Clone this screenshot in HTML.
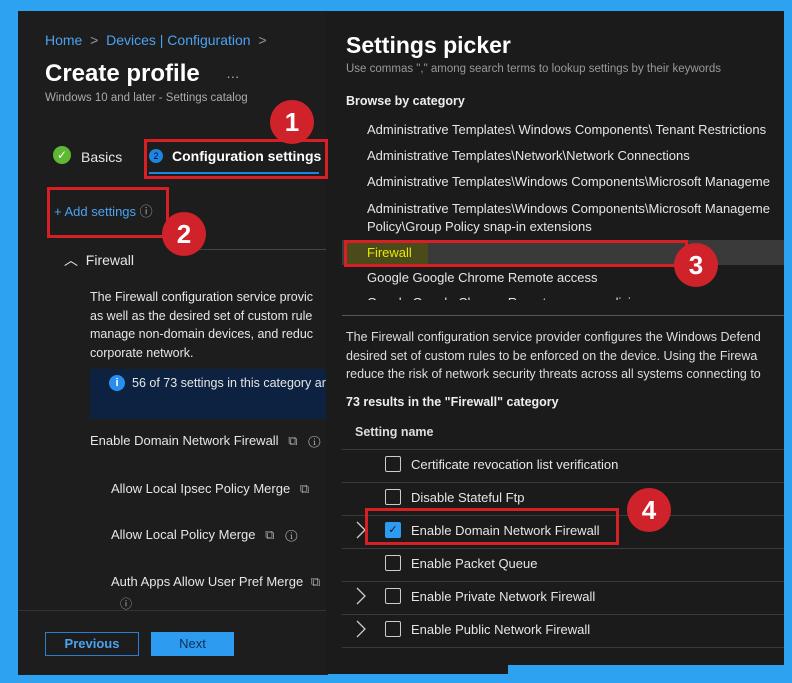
<!DOCTYPE html><html><head><style>
body{margin:0;width:792px;height:683px;background:#2ca2f0;position:relative;overflow:hidden;font-family:"Liberation Sans",sans-serif;}
.a{position:absolute;white-space:nowrap}
.l{position:absolute;left:18px;top:11px;width:310px;height:664px;background:#1e1d1d;overflow:hidden}
.r{position:absolute;left:326px;top:11px;width:458px;height:654px;background:#1b1b1b;overflow:hidden}
.rb{position:absolute;left:326px;top:650px;width:182px;height:24px;background:#1b1b1b}
.t{color:#e6e6e6;font-size:13px}
.red{position:absolute;border:3px solid #d81f26;box-sizing:border-box}
.num{position:absolute;width:44px;height:44px;border-radius:50%;background:#d0222a;color:#fff;font-weight:bold;font-size:26px;text-align:center;line-height:44px}
.cb{position:absolute;width:16px;height:16px;border:1px solid #ccc;border-radius:2px;box-sizing:border-box}
.ln{position:absolute;height:1px;background:#3a3a3a}
.chev{position:absolute;left:30px;width:10px;height:18px}
</style></head><body>
<div class="l">
<div class="a" style="left:27px;top:21px;color:#4aa3f0;font-size:14px">Home &nbsp;<span style="color:#999">&gt;</span>&nbsp; Devices | Configuration &nbsp;<span style="color:#999">&gt;</span></div>
<div class="a" style="left:27px;top:49px;color:#fff;font-size:24px;font-weight:bold">Create profile <span style="font-size:13px;font-weight:normal;color:#bbb;margin-left:20px">···</span></div>
<div class="a" style="left:27px;top:81px;color:#aaa;font-size:11.5px">Windows 10 and later - Settings catalog</div>
<div class="a" style="left:35px;top:135px;width:18px;height:18px;border-radius:50%;background:#5fb832;color:#fff;font-size:12px;text-align:center;line-height:18px">✓</div>
<div class="a t" style="left:63px;top:138px;font-size:14px">Basics</div>
<div class="a" style="left:131px;top:138px;width:14px;height:14px;border-radius:50%;background:#1d86e0;color:#103;font-size:9px;text-align:center;line-height:14px">2</div>
<div class="a" style="left:154px;top:137px;color:#fff;font-size:14px;font-weight:bold">Configuration settings</div>
<div class="a" style="left:131px;top:161px;width:170px;height:2px;background:#1d86e0"></div>
<div class="a" style="left:36px;top:190px;color:#4aa3f0;font-size:13px">+ Add settings <span style="color:#aaa">ⓘ</span></div>
<div class="a" style="left:160px;top:238px;width:150px;height:1px;background:#444"></div>
<div class="a t" style="left:46px;top:239px;font-size:14px">︿ &nbsp;Firewall</div>
<div class="a t" style="left:72px;top:277px;line-height:18.5px;font-size:12.5px">The Firewall configuration service provic<br>as well as the desired set of custom rule<br>manage non-domain devices, and reduc<br>corporate network.</div>
<div class="a" style="left:72px;top:358px;width:240px;height:50px;background:#0c2240"></div>
<div class="a" style="left:91px;top:364px;width:16px;height:16px;border-radius:50%;background:#2a8ef0;color:#fff;font-size:11px;font-weight:bold;text-align:center;line-height:16px">i</div>
<div class="a t" style="left:114px;top:365px;font-size:12.5px">56 of 73 settings in this category ar</div>
<div class="a t" style="left:72px;top:422px;font-size:13px">Enable Domain Network Firewall <span style="color:#aaa;margin-left:6px">⧉ &nbsp; ⓘ</span></div>
<div class="a t" style="left:93px;top:470px;font-size:13px">Allow Local Ipsec Policy Merge <span style="color:#aaa;margin-left:6px">⧉</span></div>
<div class="a t" style="left:93px;top:516px;font-size:13px">Allow Local Policy Merge <span style="color:#aaa;margin-left:6px">⧉ &nbsp; ⓘ</span></div>
<div class="a t" style="left:93px;top:563px;font-size:13px">Auth Apps Allow User Pref Merge <span style="color:#aaa;margin-left:4px">⧉</span></div>
<div class="a" style="left:102px;top:584px;color:#aaa;font-size:12px">ⓘ</div>
<div class="a" style="left:0;top:599px;width:310px;height:1px;background:#333"></div>
<div class="a" style="left:27px;top:621px;width:94px;height:24px;border:1px solid #2a7fd0;box-sizing:border-box;color:#4aa3f0;font-size:13px;font-weight:bold;text-align:center;line-height:22px">Previous</div>
<div class="a" style="left:133px;top:621px;width:83px;height:24px;background:#2d9bf0;color:#0e2f55;font-size:13px;text-align:center;line-height:24px">Next</div>
</div>
<div class="r">
<div class="a" style="left:20px;top:21px;color:#fff;font-size:23px;font-weight:bold">Settings picker</div>
<div class="a" style="left:20px;top:52px;color:#999;font-size:11.5px">Use commas "," among search terms to lookup settings by their keywords</div>
<div class="a" style="left:20px;top:83px;color:#eee;font-size:12.5px;font-weight:bold">Browse by category</div>
<div class="a t" style="left:41px;top:111px">Administrative Templates\ Windows Components\ Tenant Restrictions</div>
<div class="a t" style="left:41px;top:137px">Administrative Templates\Network\Network Connections</div>
<div class="a t" style="left:41px;top:163px">Administrative Templates\Windows Components\Microsoft Manageme</div>
<div class="a t" style="left:41px;top:189px;line-height:18px">Administrative Templates\Windows Components\Microsoft Manageme<br>Policy\Group Policy snap-in extensions</div>
<div class="a" style="left:16px;top:229px;width:442px;height:25px;background:#3a3a3a"></div>
<div class="a" style="left:20px;top:229px;width:82px;height:25px;background:#4a4a1a"></div>
<div class="a" style="left:41px;top:234px;color:#e8e800;font-size:13px">Firewall</div>
<div class="a t" style="left:41px;top:259px">Google Google Chrome Remote access</div>
<div class="a t" style="left:41px;top:284px;height:5px;overflow:hidden">Google Google Chrome Remote access policies</div>
<div class="a" style="left:16px;top:304px;width:442px;height:1px;background:#555"></div>
<div class="a" style="left:20px;top:317px;color:#ddd;font-size:12.5px;line-height:18.5px">The Firewall configuration service provider configures the Windows Defend<br>desired set of custom rules to be enforced on the device. Using the Firewa<br>reduce the risk of network security threats across all systems connecting to</div>
<div class="a" style="left:20px;top:384px;color:#eee;font-size:12.5px;font-weight:bold">73 results in the "Firewall" category</div>
<div class="a" style="left:29px;top:414px;color:#ddd;font-size:12.5px;font-weight:bold">Setting name</div>
<div class="ln" style="left:16px;top:438px;width:442px"></div>
<div class="cb" style="left:59px;top:445px"></div><div class="a t" style="left:85px;top:446px">Certificate revocation list verification</div>
<div class="ln" style="left:16px;top:471px;width:442px"></div>
<div class="cb" style="left:59px;top:478px"></div><div class="a t" style="left:85px;top:479px">Disable Stateful Ftp</div>
<div class="ln" style="left:16px;top:504px;width:442px"></div>
<svg class="chev" style="top:510px" viewBox="0 0 10 18"><path d="M1 1 L9 9 L1 17" fill="none" stroke="#ccc" stroke-width="1.3"/></svg>
<div class="cb" style="left:59px;top:511px;background:#2d9bf0;border-color:#2d9bf0;color:#113;font-size:11px;text-align:center;line-height:14px">✓</div><div class="a t" style="left:85px;top:512px">Enable Domain Network Firewall</div>
<div class="ln" style="left:16px;top:537px;width:442px"></div>
<div class="cb" style="left:59px;top:544px"></div><div class="a t" style="left:85px;top:545px">Enable Packet Queue</div>
<div class="ln" style="left:16px;top:570px;width:442px"></div>
<svg class="chev" style="top:576px" viewBox="0 0 10 18"><path d="M1 1 L9 9 L1 17" fill="none" stroke="#ccc" stroke-width="1.3"/></svg>
<div class="cb" style="left:59px;top:577px"></div><div class="a t" style="left:85px;top:578px">Enable Private Network Firewall</div>
<div class="ln" style="left:16px;top:603px;width:442px"></div>
<svg class="chev" style="top:609px" viewBox="0 0 10 18"><path d="M1 1 L9 9 L1 17" fill="none" stroke="#ccc" stroke-width="1.3"/></svg>
<div class="cb" style="left:59px;top:610px"></div><div class="a t" style="left:85px;top:611px">Enable Public Network Firewall</div>
<div class="ln" style="left:16px;top:636px;width:442px"></div>
<div class="cb" style="left:59px;top:643px"></div><div class="a t" style="left:85px;top:645px;height:5px;overflow:hidden">IPsec Exceptions</div>
</div>
<div class="rb"></div>
<div class="red" style="left:144px;top:139px;width:184px;height:40px"></div>
<div class="red" style="left:47px;top:187px;width:122px;height:51px"></div>
<div class="red" style="left:344px;top:240px;width:344px;height:27px"></div>
<div class="red" style="left:365px;top:508px;width:254px;height:37px"></div>
<div class="num" style="left:270px;top:100px">1</div>
<div class="num" style="left:162px;top:212px">2</div>
<div class="num" style="left:674px;top:243px">3</div>
<div class="num" style="left:627px;top:488px">4</div>
</body></html>
